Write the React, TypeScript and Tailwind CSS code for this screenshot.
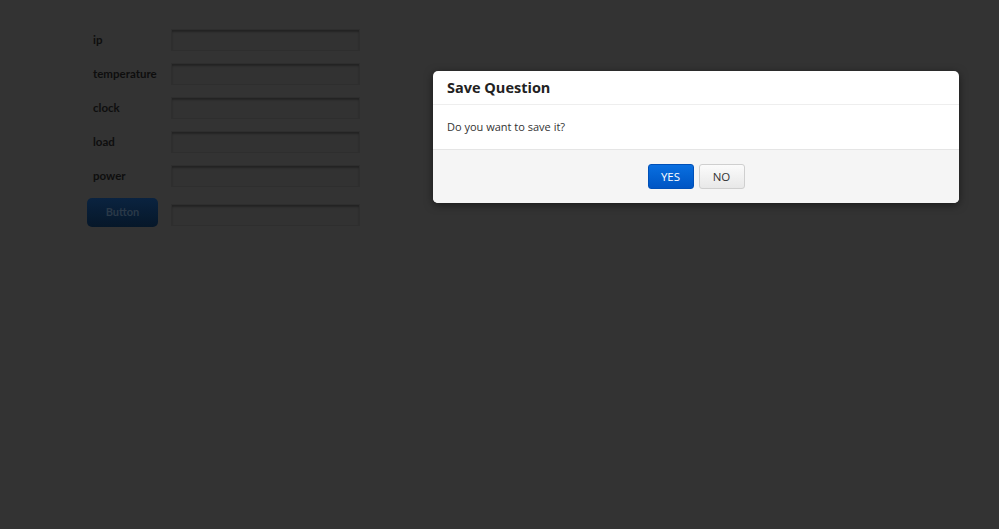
const fields = ["ip", "temperature", "clock", "load", "power"];

function Field({ label }: { label: string }) {
  return (
    <div className="flex items-center h-[34px]">
      <label className="w-[84px] pl-[6px] text-[11.5px] font-bold text-[#0e0e0e]">{label}</label>
      <input
        type="text"
        className="w-[189px] h-[22px] bg-[#323232] border border-[#2e2e2e] shadow-[inset_0_2px_2px_rgba(0,0,0,0.3)] outline-none"
      />
    </div>
  );
}

export default function App() {
  return (
    <div className="relative w-full h-[529px] bg-[#333333] overflow-hidden" style={{ fontFamily: "Lato, 'Open Sans', sans-serif" }}>
      <div className="pl-[87px] pt-[23px] flex flex-col">
        {fields.map((f) => (
          <Field key={f} label={f} />
        ))}
        <div className="flex items-center mt-[5px]">
          <button className="w-[71px] h-[29px] rounded-[5px] bg-gradient-to-b from-[#0a2340] to-[#061729] text-[11px] font-bold text-[#2a3948]">
            Button
          </button>
          <input
            type="text"
            className="ml-[13px] mt-[4px] w-[189px] h-[22px] bg-[#323232] border border-[#2e2e2e] shadow-[inset_0_2px_2px_rgba(0,0,0,0.3)] outline-none"
          />
        </div>
      </div>

      <div
        className="absolute left-[433px] top-[71px] w-[526px] bg-white rounded-[5px] shadow-[0_2px_8px_rgba(0,0,0,0.5)] overflow-hidden"
        style={{ fontFamily: "'Open Sans', 'Noto Sans', sans-serif" }}
      >
        <div className="h-[34px] px-[14px] flex items-center border-b border-[#eeeeee]">
          <h2 className="text-[14.5px] font-bold text-[#222]">Save Question</h2>
        </div>
        <div className="h-[45px] px-[14px] flex items-center border-b border-[#e5e5e5]">
          <p className="text-[11px] text-[#333]">Do you want to save it?</p>
        </div>
        <div className="h-[53px] bg-[#f5f5f5] flex items-center justify-center gap-[5px]">
          <button className="w-[46px] h-[25px] rounded-[3px] bg-gradient-to-b from-[#0a6fe0] to-[#0055c4] border border-[#0050b8] text-[11.5px] text-white">
            YES
          </button>
          <button className="w-[46px] h-[25px] rounded-[3px] bg-gradient-to-b from-[#fbfbfb] to-[#e8e8e8] border border-[#cfcfcf] text-[11.5px] text-[#333]">
            NO
          </button>
        </div>
      </div>
    </div>
  );
}
